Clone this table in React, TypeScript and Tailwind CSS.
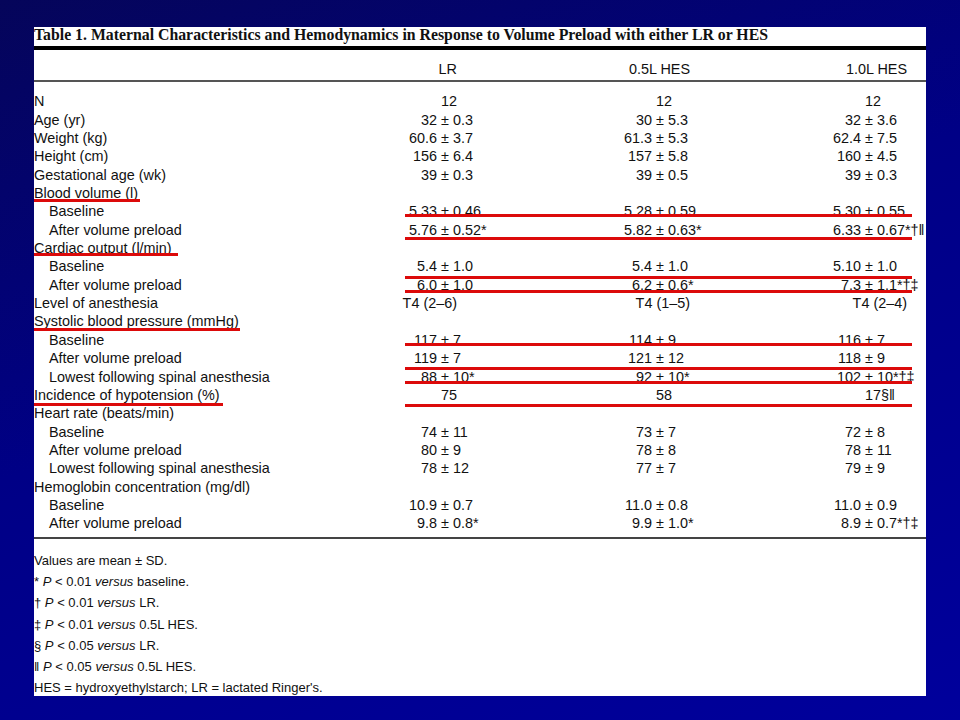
import React from "react";

type Row = { l: string; sub?: boolean; v?: [string, string, string] };

const rows: Row[] = [
  { l: "N", v: ["12", "12", "12"] },
  { l: "Age (yr)", v: ["32 ± 0.3", "30 ± 5.3", "32 ± 3.6"] },
  { l: "Weight (kg)", v: ["60.6 ± 3.7", "61.3 ± 5.3", "62.4 ± 7.5"] },
  { l: "Height (cm)", v: ["156 ± 6.4", "157 ± 5.8", "160 ± 4.5"] },
  { l: "Gestational age (wk)", v: ["39 ± 0.3", "39 ± 0.5", "39 ± 0.3"] },
  { l: "Blood volume (l)" },
  { l: "Baseline", sub: true, v: ["5.33 ± 0.46", "5.28 ± 0.59", "5.30 ± 0.55"] },
  { l: "After volume preload", sub: true, v: ["5.76 ± 0.52*", "5.82 ± 0.63*", "6.33 ± 0.67*†‖"] },
  { l: "Cardiac output (l/min)" },
  { l: "Baseline", sub: true, v: ["5.4 ± 1.0", "5.4 ± 1.0", "5.10 ± 1.0"] },
  { l: "After volume preload", sub: true, v: ["6.0 ± 1.0", "6.2 ± 0.6*", "7.3 ± 1.1*†‡"] },
  { l: "Level of anesthesia", v: ["T4 (2–6)", "T4 (1–5)", "T4 (2–4)"] },
  { l: "Systolic blood pressure (mmHg)" },
  { l: "Baseline", sub: true, v: ["117 ± 7", "114 ± 9", "116 ± 7"] },
  { l: "After volume preload", sub: true, v: ["119 ± 7", "121 ± 12", "118 ± 9"] },
  { l: "Lowest following spinal anesthesia", sub: true, v: ["88 ± 10*", "92 ± 10*", "102 ± 10*†‡"] },
  { l: "Incidence of hypotension (%)", v: ["75", "58", "17§‖"] },
  { l: "Heart rate (beats/min)" },
  { l: "Baseline", sub: true, v: ["74 ± 11", "73 ± 7", "72 ± 8"] },
  { l: "After volume preload", sub: true, v: ["80 ± 9", "78 ± 8", "78 ± 11"] },
  { l: "Lowest following spinal anesthesia", sub: true, v: ["78 ± 12", "77 ± 7", "79 ± 9"] },
  { l: "Hemoglobin concentration (mg/dl)" },
  { l: "Baseline", sub: true, v: ["10.9 ± 0.7", "11.0 ± 0.8", "11.0 ± 0.9"] },
  { l: "After volume preload", sub: true, v: ["9.8 ± 0.8*", "9.9 ± 1.0*", "8.9 ± 0.7*†‡"] },
];

// left part width (up to the ± sign) and right-aligned width, per column
const cols = [
  { lw: "w-[47px]", ew: "w-[63px]" },
  { lw: "w-[62px]", ew: "w-[96px]" },
  { lw: "w-[61px]", ew: "w-[103px]" },
];

// red pen marks drawn over the table
const marks = [
  "top-[172px] left-0 w-[106px]",
  "top-[187px] left-[371px] w-[507px]",
  "top-[210px] left-[371px] w-[507px]",
  "top-[226px] left-0 w-[144px]",
  "top-[249px] left-[371px] w-[507px]",
  "top-[263px] left-[371px] w-[507px]",
  "top-[301px] left-0 w-[206px]",
  "top-[316px] left-[371px] w-[507px]",
  "top-[340px] left-[371px] w-[507px]",
  "top-[354px] left-[371px] w-[507px]",
  "top-[376px] left-0 w-[189px]",
  "top-[377px] left-[371px] w-[507px]",
];

function Val({ v, lw, ew }: { v: string; lw: string; ew: string }) {
  if (v.startsWith("T4")) return <div className={`${ew} text-right`}>{v}</div>;
  const i = v.indexOf(" ± ");
  if (i < 0)
    return (
      <div className="flex whitespace-nowrap">
        <span className={`${lw} shrink-0`} />
        <span>{v}</span>
      </div>
    );
  return (
    <div className="flex whitespace-nowrap">
      <span className={`${lw} shrink-0 text-right`}>
        {v.slice(0, i)}
        {"\u00a0"}
      </span>
      <span>± {v.slice(i + 3)}</span>
    </div>
  );
}

const notes: React.ReactNode[] = [
  <>Values are mean ± SD.</>,
  <>* <i>P</i> &lt; 0.01 <i>versus</i> baseline.</>,
  <>† <i>P</i> &lt; 0.01 <i>versus</i> LR.</>,
  <>‡ <i>P</i> &lt; 0.01 <i>versus</i> 0.5L HES.</>,
  <>§ <i>P</i> &lt; 0.05 <i>versus</i> LR.</>,
  <>‖ <i>P</i> &lt; 0.05 <i>versus</i> 0.5L HES.</>,
  <>HES = hydroxyethylstarch; LR = lactated Ringer's.</>,
];

export default function App() {
  return (
    <div className="w-[960px] h-[720px] overflow-hidden bg-[linear-gradient(160deg,#05055a_0%,#000086_45%,#00009c_100%)] pt-[27px] pl-[34px]">
      <div className="relative w-[892px] h-[669px] overflow-hidden bg-white text-[#111] font-['Liberation_Sans',Arial,sans-serif]">
        <h1 className="h-[17px] text-[15.8px] leading-[17px] -mt-[1px] font-bold whitespace-nowrap font-['Liberation_Serif','Times_New_Roman',serif]">
          Table 1. Maternal Characteristics and Hemodynamics in Response to Volume Preload with either LR or HES
        </h1>
        <div className="mt-[3px] h-[4px] bg-black" />

        <div className="mt-[10px] grid grid-cols-[360px_200px_210px_1fr] h-[18.35px] text-[14.4px] leading-[18.35px]">
          <div />
          <div className="w-[63px] text-right">LR</div>
          <div className="w-[96px] text-right">0.5L HES</div>
          <div className="w-[103px] text-right">1.0L HES</div>
        </div>
        <div className="mt-[2px] h-[2px] bg-[#555]" />

        <div className="mt-[10px] text-[14.4px] leading-[18.35px]">
          {rows.map((r, k) => (
            <div key={k} className="grid grid-cols-[360px_200px_210px_1fr] h-[18.35px]">
              <div className={r.sub ? "pl-[15px] whitespace-nowrap" : "whitespace-nowrap"}>{r.l}</div>
              {r.v ? r.v.map((v, j) => <Val key={j} v={v} lw={cols[j].lw} ew={cols[j].ew} />) : null}
            </div>
          ))}
        </div>
        <div className="mt-[4px] h-[2.5px] bg-[#444]" />

        <div className="mt-[11px] text-[13px] leading-[21.17px]">
          {notes.map((n, k) => (
            <div key={k} className="whitespace-nowrap">{n}</div>
          ))}
        </div>

        {marks.map((m, k) => (
          <div key={k} className={`absolute h-[3px] bg-[#dc0a0a] ${m}`} />
        ))}
      </div>
    </div>
  );
}
